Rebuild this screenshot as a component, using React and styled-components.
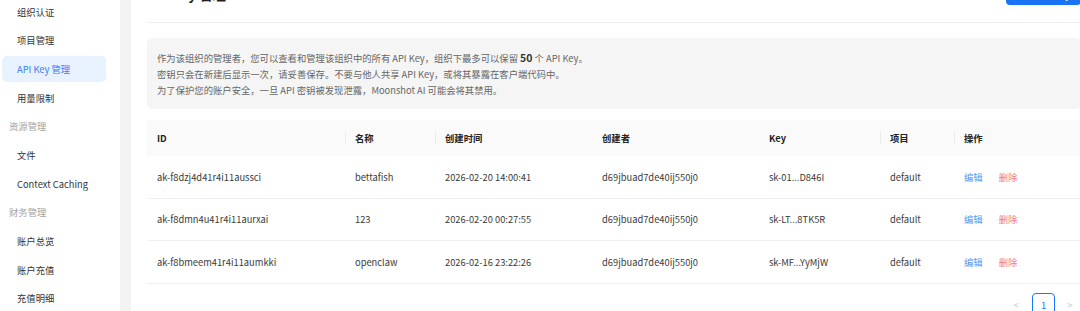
import React from 'react';
import styled, { createGlobalStyle, css } from 'styled-components';

const GlobalStyle = createGlobalStyle`
  html, body {
    margin: 0;
    padding: 0;
    overflow: hidden;
    background: #ffffff;
  }
  body {
    font-family: "Noto Sans CJK SC", "Noto Sans", sans-serif;
    color: #333;
    font-size: 9.33px;
  }
`;

const Viewport = styled.div`
  width: 1080px;
  height: 311px;
  overflow: hidden;
`;

/* page is scrolled down a little, so everything starts above the window */
const Page = styled.div`
  display: flex;
  width: 1097px;
  margin-top: -60px;
  background: #f3f3f3;
`;

const Sidebar = styled.nav`
  width: 120px;
  flex-shrink: 0;
  background: #fff;
  padding: 0 0 0 2px;
  box-sizing: border-box;
  display: flex;
  flex-direction: column;
`;

const GroupLabel = styled.div`
  height: 26px;
  margin: 1.33px 0;
  display: flex;
  align-items: center;
  padding-left: 7px;
  color: #a3a3a3;
`;

const NavItem = styled.div`
  width: 104px;
  height: 26px;
  margin: 1.33px 0;
  display: flex;
  align-items: center;
  padding-left: 15px;
  box-sizing: border-box;
  border-radius: 5px;
  color: #333;
  ${(p) =>
    p.$active &&
    css`
      background: #e8f1fe;
      color: #3b7ef5;
    `}
`;

const Main = styled.main`
  flex: 1;
  margin-left: 11px;
  background: #fff;
  padding: 43px 16px 0 16px;
  display: flex;
  flex-direction: column;
`;

const HeaderRow = styled.div`
  display: flex;
  align-items: center;
  justify-content: space-between;
  height: 22px;
`;

const Title = styled.h1`
  margin: 0;
  font-size: 13.33px;
  font-weight: 600;
  color: #1f1f1f;
`;

const PrimaryButton = styled.button`
  height: 22px;
  padding: 0 11px;
  border: none;
  border-radius: 4px;
  background: #1a73f5;
  color: #fff;
  font: inherit;
`;

const Divider = styled.div`
  height: 1px;
  background: #efefef;
  margin: 17px 0 15px;
`;

const Notice = styled.div`
  background: #f5f5f5;
  border-radius: 5px;
  padding: 12px 10px 11px;
  color: #666;
  line-height: 16px;
`;

const Strong = styled.b`
  color: #333;
  font-weight: 700;
  font-size: 10.5px;
`;

const Table = styled.div`
  margin-top: 11px;
  display: grid;
  grid-template-columns: 198px 90px 157px 167px 121px 74px 1fr;
`;

const HeadCell = styled.div`
  position: relative;
  height: 36px;
  display: flex;
  align-items: center;
  padding: 0 10px;
  background: #fafafa;
  color: #222;
  font-weight: 600;
  ${(p) =>
    p.$sep &&
    css`
      &::before {
        content: '';
        position: absolute;
        left: 0;
        top: 50%;
        width: 1px;
        height: 14px;
        transform: translateY(-50%);
        background: #ececec;
      }
    `}
`;

const Cell = styled.div`
  height: 42.67px;
  display: flex;
  align-items: center;
  padding: 0 10px;
  border-bottom: 1px solid #f0f0f0;
  box-sizing: border-box;
  color: #3a3a3a;
  white-space: nowrap;
`;

const Actions = styled(Cell)`
  gap: 16px;
`;

const ActionLink = styled.span`
  color: ${(p) => (p.$danger ? '#f27a7c' : '#5596f7')};
  cursor: pointer;
`;

const Pagination = styled.div`
  display: flex;
  justify-content: flex-end;
  align-items: center;
  margin-top: 10px;
  height: 22px;
`;

const PageArrow = styled.span`
  width: 22px;
  text-align: center;
  color: #c8c8c8;
  font-size: 10px;
`;

const PageNum = styled.span`
  width: 21px;
  height: 21px;
  margin: 0 4px 0 5px;
  border: 1px solid #1677ff;
  border-radius: 4px;
  color: #1677ff;
  display: flex;
  align-items: center;
  justify-content: center;
`;

const nav = [
  { group: '组织管理' },
  { label: '成员管理' },
  { label: '组织认证' },
  { label: '项目管理' },
  { label: 'API Key 管理', active: true },
  { label: '用量限制' },
  { group: '资源管理' },
  { label: '文件' },
  { label: 'Context Caching' },
  { group: '财务管理' },
  { label: '账户总览' },
  { label: '账户充值' },
  { label: '充值明细' },
];

const columns = [
  { title: 'ID' },
  { title: '名称', sep: true },
  { title: '创建时间', sep: true },
  { title: '创建者' },
  { title: 'Key' },
  { title: '项目', sep: true },
  { title: '操作', sep: true },
];

const keys = [
  ['ak-f8dzj4d41r4i11aussci', 'bettafish', '2026-02-20 14:00:41', 'd69jbuad7de40ij550j0', 'sk-01...D846I', 'default'],
  ['ak-f8dmn4u41r4i11aurxai', '123', '2026-02-20 00:27:55', 'd69jbuad7de40ij550j0', 'sk-LT...8TK5R', 'default'],
  ['ak-f8bmeem41r4i11aumkki', 'openclaw', '2026-02-16 23:22:26', 'd69jbuad7de40ij550j0', 'sk-MF...YyMjW', 'default'],
];

export default function App() {
  return (
    <Viewport>
      <GlobalStyle />
      <Page>
        <Sidebar>
          {nav.map((n, i) =>
            n.group ? (
              <GroupLabel key={i}>{n.group}</GroupLabel>
            ) : (
              <NavItem key={i} $active={n.active}>
                {n.label}
              </NavItem>
            )
          )}
        </Sidebar>

        <Main>
          <HeaderRow>
            <Title>API Key 管理</Title>
            <PrimaryButton>新建 API Key</PrimaryButton>
          </HeaderRow>
          <Divider />

          <Notice>
            <div>
              作为该组织的管理者，您可以查看和管理该组织中的所有 API Key，组织下最多可以保留 <Strong>50</Strong> 个 API Key。
            </div>
            <div>密钥只会在新建后显示一次，请妥善保存。不要与他人共享 API Key，或将其暴露在客户端代码中。</div>
            <div>为了保护您的账户安全，一旦 API 密钥被发现泄露，Moonshot AI 可能会将其禁用。</div>
          </Notice>

          <Table>
            {columns.map((c) => (
              <HeadCell key={c.title} $sep={c.sep}>
                {c.title}
              </HeadCell>
            ))}
            {keys.map((row) => (
              <React.Fragment key={row[0]}>
                {row.map((v, i) => (
                  <Cell key={i}>{v}</Cell>
                ))}
                <Actions>
                  <ActionLink>编辑</ActionLink>
                  <ActionLink $danger>删除</ActionLink>
                </Actions>
              </React.Fragment>
            ))}
          </Table>

          <Pagination>
            <PageArrow>&lt;</PageArrow>
            <PageNum>1</PageNum>
            <PageArrow>&gt;</PageArrow>
          </Pagination>
        </Main>
      </Page>
    </Viewport>
  );
}
